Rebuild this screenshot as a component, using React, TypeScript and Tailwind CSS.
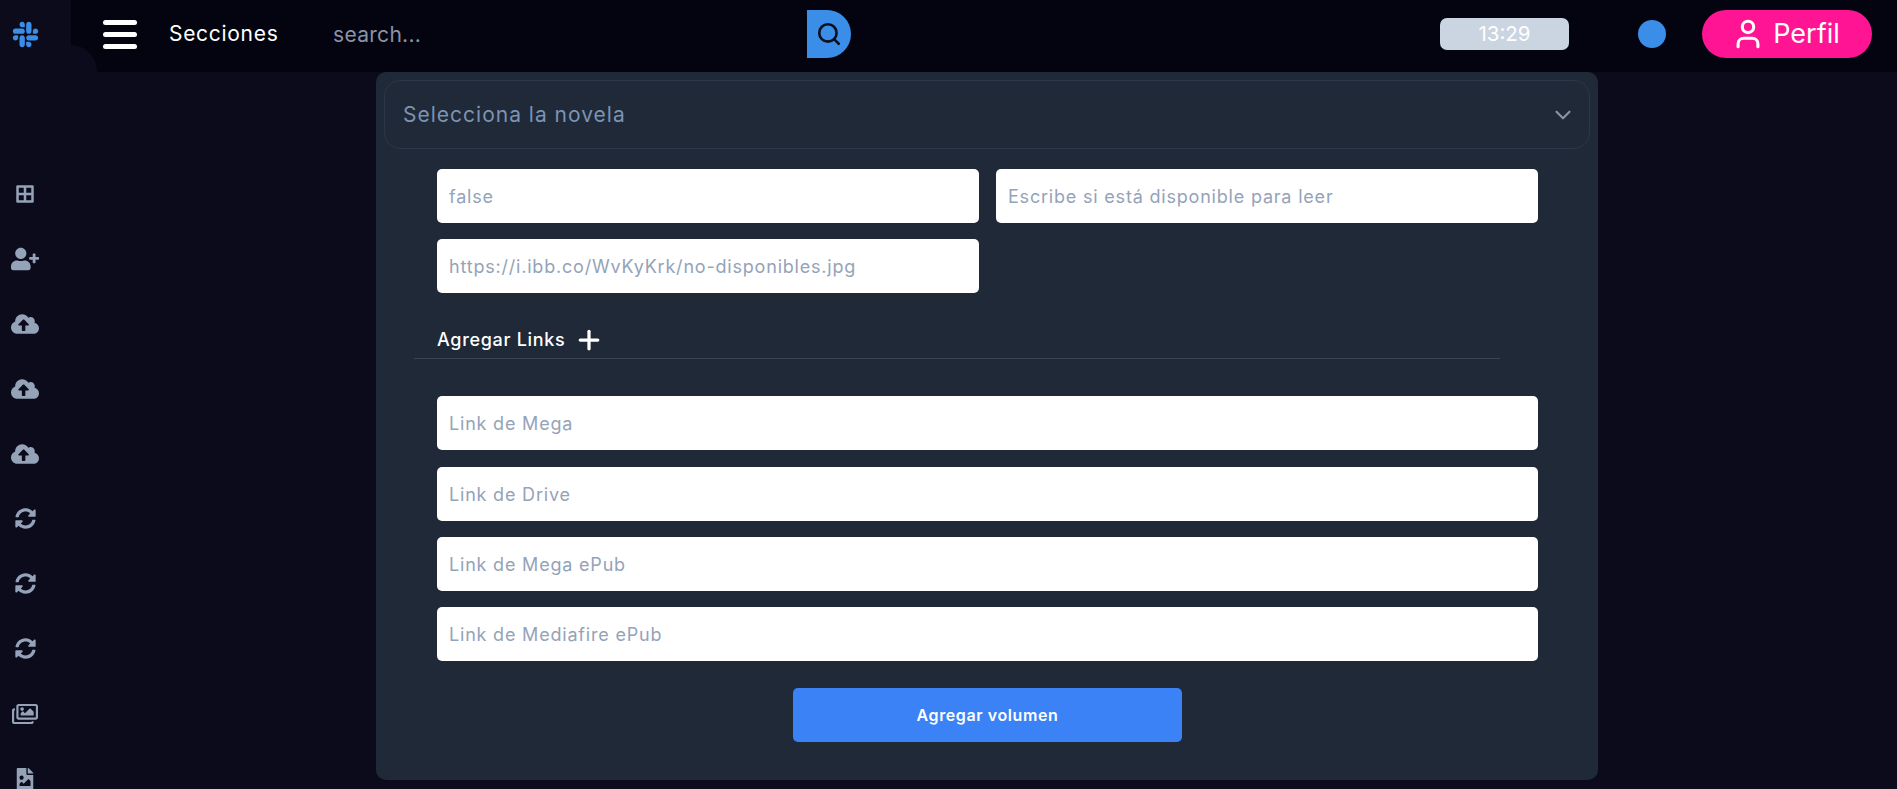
import React from 'react';
import { ChevronDown, Plus, Search, User } from 'lucide-react';
import { FaBorderAll, FaCloudUploadAlt, FaFileImage, FaRegImages, FaSlack, FaSyncAlt, FaUserPlus } from 'react-icons/fa';

const sideIcons = [
  { Icon: FaBorderAll, size: 20 },
  { Icon: FaUserPlus, size: 28 },
  { Icon: FaCloudUploadAlt, size: 28 },
  { Icon: FaCloudUploadAlt, size: 28 },
  { Icon: FaCloudUploadAlt, size: 28 },
  { Icon: FaSyncAlt, size: 21 },
  { Icon: FaSyncAlt, size: 21 },
  { Icon: FaSyncAlt, size: 21 },
  { Icon: FaRegImages, size: 26 },
  { Icon: FaFileImage, size: 22 },
];

const Field = ({ placeholder }: { placeholder: string }) => (
  <input
    placeholder={placeholder}
    className="w-full h-[54px] bg-white rounded-[5px] px-[12px] text-[18px] tracking-[0.8px] outline-none placeholder:text-[#94a3b8]"
  />
);

const App = () => {
  return (
    <div className="relative flex h-[789px] overflow-hidden bg-[#0b0b1c] font-['Inter','Liberation_Sans',sans-serif]">
      <aside className="w-[71px] shrink-0 flex flex-col">
        <div className="h-[72px] shrink-0 w-[50px] flex items-center justify-center pb-[4px]">
          <FaSlack size={29} className="text-[#3b8ee8]" />
        </div>
        <nav className="w-[50px] shrink-0 flex flex-col items-center mt-[89px]">
          {sideIcons.map(({ Icon, size }, i) => (
            <div key={i} className="h-[65px] shrink-0 flex items-center justify-center text-[#94a3b8]">
              <Icon size={size} />
            </div>
          ))}
        </nav>
      </aside>

      <div className="flex-1 flex flex-col min-w-0">
        <header className="h-[72px] shrink-0 bg-[#03040f] flex items-center pb-[4px]">
          <button className="ml-[32px] w-[34px] flex flex-col gap-[7px]">
            <span className="h-[5px] rounded-full bg-white"></span>
            <span className="h-[5px] rounded-full bg-white"></span>
            <span className="h-[5px] rounded-full bg-white"></span>
          </button>
          <span className="ml-[32px] w-[110px] text-white text-[21px] tracking-[0.7px]">Secciones</span>
          <input
            placeholder="search..."
            className="ml-[54px] w-[474px] h-[48px] bg-transparent text-[21px] tracking-[0.3px] outline-none placeholder:text-[#8b93a3]"
          />
          <button className="w-[44px] h-[48px] bg-[#3b8ee8] rounded-r-full flex items-center justify-center text-[#0b1020]">
            <Search size={26} strokeWidth={2.4} />
          </button>
          <div className="ml-[589px] w-[129px] h-[32px] rounded-[7px] bg-[#cbd5e1] text-white text-[20.5px] flex items-center justify-center">
            13:29
          </div>
          <span className="ml-[69px] w-[28px] h-[28px] rounded-full bg-[#3b8ee8]"></span>
          <button className="ml-[36px] w-[170px] h-[48px] rounded-full bg-[#ff1493] text-white flex items-center justify-center gap-[8px] pr-[3px] text-[27px]">
            <User size={34} strokeWidth={2.2} />
            Perfil
          </button>
        </header>

        <main className="flex-1 min-h-0">
          <section className="ml-[305px] w-[1222px] h-[708px] rounded-[10px] bg-[#1f2937] p-[8px]">
            <div className="h-[69px] rounded-[16px] border border-[#2b3648] flex items-center justify-between pl-[18px] pr-[13px] text-[#7c93b2] text-[21px] tracking-[1px]">
              <span>Selecciona la novela</span>
              <ChevronDown size={26} className="text-[#8b93a3]" />
            </div>

            <div className="mt-[20px] pl-[53px] pr-[52px]">
              <div className="grid grid-cols-2 gap-x-[17px] gap-y-[16px]">
                <Field placeholder="false" />
                <Field placeholder="Escribe si está disponible para leer" />
                <Field placeholder="https://i.ibb.co/WvKyKrk/no-disponibles.jpg" />
              </div>
            </div>

            <div className="mt-[28px] ml-[30px] w-[1086px] h-[38px] border-b border-[#3a4455] flex items-center gap-[8px] pl-[23px] text-white text-[18px] tracking-[0.7px] font-medium">
              Agregar Links
              <Plus size={30} strokeWidth={2.6} />
            </div>

            <div className="mt-[37px] pl-[53px] pr-[52px] flex flex-col gap-[16px]">
              <div className="mb-[1px]">
                <Field placeholder="Link de Mega" />
              </div>
              <Field placeholder="Link de Drive" />
              <Field placeholder="Link de Mega ePub" />
              <Field placeholder="Link de Mediafire ePub" />
            </div>

            <div className="mt-[27px] ml-[409px] w-[389px]">
              <button className="w-full h-[54px] rounded-[5px] bg-[#3b82f6] text-white text-[16px] tracking-[0.6px] font-semibold">
                Agregar volumen
              </button>
            </div>
          </section>
        </main>
      </div>

      {/* curved corner where the sidebar meets the top bar */}
      <div className="absolute left-[71px] top-[45px] w-[26px] h-[27px] bg-[#0b0b1c] rounded-tr-[26px]"></div>
    </div>
  );
};

export default App;
